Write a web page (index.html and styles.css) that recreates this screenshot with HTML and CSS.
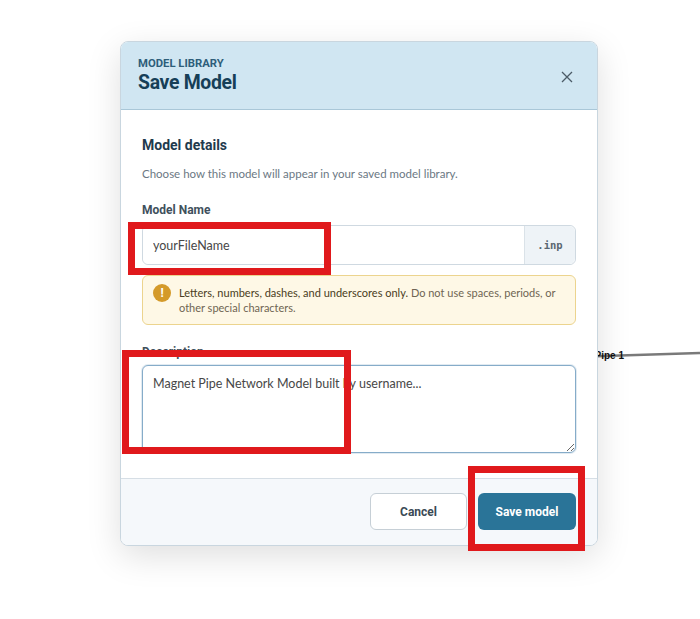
FILE: index.html
```html
<!DOCTYPE html>
<html lang="en">
<head>
    <meta charset="UTF-8">
    <meta name="viewport" content="width=device-width, initial-scale=1.0">
    <title>Save Model</title>
    <link rel="stylesheet" href="styles.css">
</head>
<body>
    <!-- canvas behind the dialog -->
    <svg class="canvas" width="700" height="619" viewBox="0 0 700 619">
        <line x1="540" y1="358" x2="700" y2="353" stroke="#7a7a7a" stroke-width="2.5"/>
        <text x="624" y="359" text-anchor="end" class="pipe-label">Pipe 1</text>
    </svg>

    <div class="modal">
        <div class="modal-header">
            <div>
                <div class="eyebrow">MODEL LIBRARY</div>
                <h2>Save Model</h2>
            </div>
            <button class="close" aria-label="Close">
                <svg width="12" height="12" viewBox="0 0 12 12">
                    <path d="M1 1 L11 11 M11 1 L1 11" stroke="#4b5b67" stroke-width="1.3" fill="none"/>
                </svg>
            </button>
        </div>

        <div class="modal-body">
            <h3>Model details</h3>
            <p class="hint">Choose how this model will appear in your saved model library.</p>

            <label class="field-label" for="name">Model Name</label>
            <div class="input-group">
                <input type="text" id="name" value="yourFileName">
                <span class="addon">.inp</span>
                <div class="mark mark-name"></div>
            </div>

            <div class="warning">
                <span class="warn-icon">!</span>
                <p><span class="strong">Letters, numbers, dashes, and underscores only.</span> Do not use spaces, periods, or other special characters.</p>
            </div>

            <div class="desc-wrap">
                <label class="field-label desc-label" for="desc">Description</label>
                <textarea id="desc">Magnet Pipe Network Model built by username...</textarea>
                <div class="mark mark-desc"></div>
            </div>
        </div>

        <div class="modal-footer">
            <button class="btn btn-cancel">Cancel</button>
            <div class="save-wrap">
                <button class="btn btn-save">Save model</button>
                <div class="mark mark-save"></div>
            </div>
        </div>
    </div>
</body>
</html>
```

FILE: styles.css
```css
body {
    margin: 0;
    background: #fff;
    font-family: Lato, "Open Sans", Arial, sans-serif;
    position: relative;
    height: 619px;
    overflow: hidden;
}
.canvas {
    position: absolute;
    left: 0;
    top: 0;
}
.pipe-label {
    font-family: "Liberation Sans", Arial, sans-serif;
    font-weight: bold;
    font-size: 10px;
    fill: #111;
}
.modal {
    position: relative;
    width: 476px;
    margin: 41px 0 0 120px;
    background: #fff;
    border: 1px solid #c9d6df;
    border-radius: 8px;
    box-shadow: 0 10px 34px rgba(0, 0, 0, 0.13);
}
.modal-header {
    display: flex;
    justify-content: space-between;
    align-items: center;
    background: #d0e6f2;
    border-bottom: 1px solid #a9c7d8;
    border-radius: 7px 7px 0 0;
    padding: 14px 24px 14px 17px;
    height: 39px;
}
.eyebrow {
    font-family: Roboto, sans-serif;
    font-size: 11.3px;
    font-weight: bold;
    color: #2e5e7a;
    line-height: 14px;
}
.modal-header h2 {
    margin: 0;
    font-family: Roboto, sans-serif;
    font-size: 19.4px;
    font-weight: bold;
    color: #163f58;
    line-height: 24px;
    letter-spacing: -0.3px;
}
.close {
    background: none;
    border: none;
    padding: 0;
    width: 12px;
    height: 12px;
    margin-top: 2px;
}
.modal-body {
    padding: 26px 21px 25px;
}
h3 {
    margin: 0;
    font-family: Roboto, sans-serif;
    font-size: 14px;
    font-weight: bold;
    color: #1f3a4d;
    line-height: 18px;
}
.hint {
    margin: 12px 0 0;
    font-size: 11.5px;
    line-height: 16px;
    color: #6b7883;
}
.field-label {
    display: block;
    margin-top: 20px;
    font-family: Roboto, sans-serif;
    font-size: 12px;
    font-weight: bold;
    color: #3f505c;
    line-height: 16px;
}
.input-group {
    position: relative;
    display: flex;
    margin-top: 7px;
    height: 40px;
    border: 1px solid #cfd9e1;
    border-radius: 6px;
    box-sizing: border-box;
}
.input-group input {
    flex: 1;
    min-width: 0;
    border: none;
    border-radius: 6px 0 0 6px;
    padding: 0 10px;
    font-family: Lato, sans-serif;
    font-size: 12.5px;
    color: #474747;
    outline: none;
}
.addon {
    display: flex;
    align-items: center;
    justify-content: center;
    width: 50px;
    background: #eef3f7;
    border-left: 1px solid #dae2e8;
    border-radius: 0 6px 6px 0;
    font-family: "DejaVu Sans Mono", monospace;
    font-size: 10.5px;
    font-weight: bold;
    color: #5a6670;
}
.warning {
    display: flex;
    align-items: flex-start;
    gap: 8px;
    margin-top: 10px;
    padding: 9px 10px 9px 10px;
    background: #fef8e6;
    border: 1px solid #ecd48e;
    border-radius: 6px;
}
.warn-icon {
    flex: none;
    width: 18px;
    height: 18px;
    border-radius: 50%;
    background: #d49a2a;
    color: #fff;
    font-family: Roboto, sans-serif;
    font-weight: bold;
    font-size: 12px;
    line-height: 18px;
    text-align: center;
    margin-top: -1px;
}
.warning p {
    margin: 0;
    font-size: 11px;
    line-height: 15px;
    color: #6f6553;
}
.warning .strong {
    color: #4a3d22;
}
.desc-wrap {
    position: relative;
}
.desc-label {
    margin-top: 19px;
}
textarea {
    display: block;
    width: 100%;
    height: 88px;
    margin-top: 5px;
    box-sizing: border-box;
    padding: 10px 10px;
    border: 1px solid #86acc9;
    border-radius: 6px;
    box-shadow: 0 0 0 1px rgba(134, 172, 201, 0.25);
    font-family: Lato, sans-serif;
    font-size: 12.5px;
    color: #474747;
    outline: none;
}
.modal-footer {
    display: flex;
    justify-content: flex-end;
    gap: 11px;
    padding: 14px 21px 15px;
    background: #f5f8fb;
    border-top: 1px solid #d6dee5;
    border-radius: 0 0 7px 7px;
}
.btn {
    height: 37px;
    border-radius: 6px;
    font-family: Roboto, sans-serif;
    font-size: 12px;
    font-weight: bold;
    cursor: pointer;
}
.btn-cancel {
    width: 97px;
    background: #fff;
    border: 1px solid #c6cfd6;
    color: #3b4a55;
}
.save-wrap {
    position: relative;
}
.btn-save {
    width: 98px;
    background: #2a7498;
    border: none;
    color: #fff;
}
/* red annotation boxes drawn over the screenshot */
.mark {
    position: absolute;
    border: 7px solid #e0191c;
    pointer-events: none;
}
.mark-name {
    left: -15px;
    top: -4px;
    width: 189px;
    height: 39px;
}
.mark-desc {
    left: -20px;
    top: 6px;
    width: 215px;
    height: 90px;
}
.mark-save {
    left: -10px;
    top: -27px;
    width: 103px;
    height: 71px;
}
```
